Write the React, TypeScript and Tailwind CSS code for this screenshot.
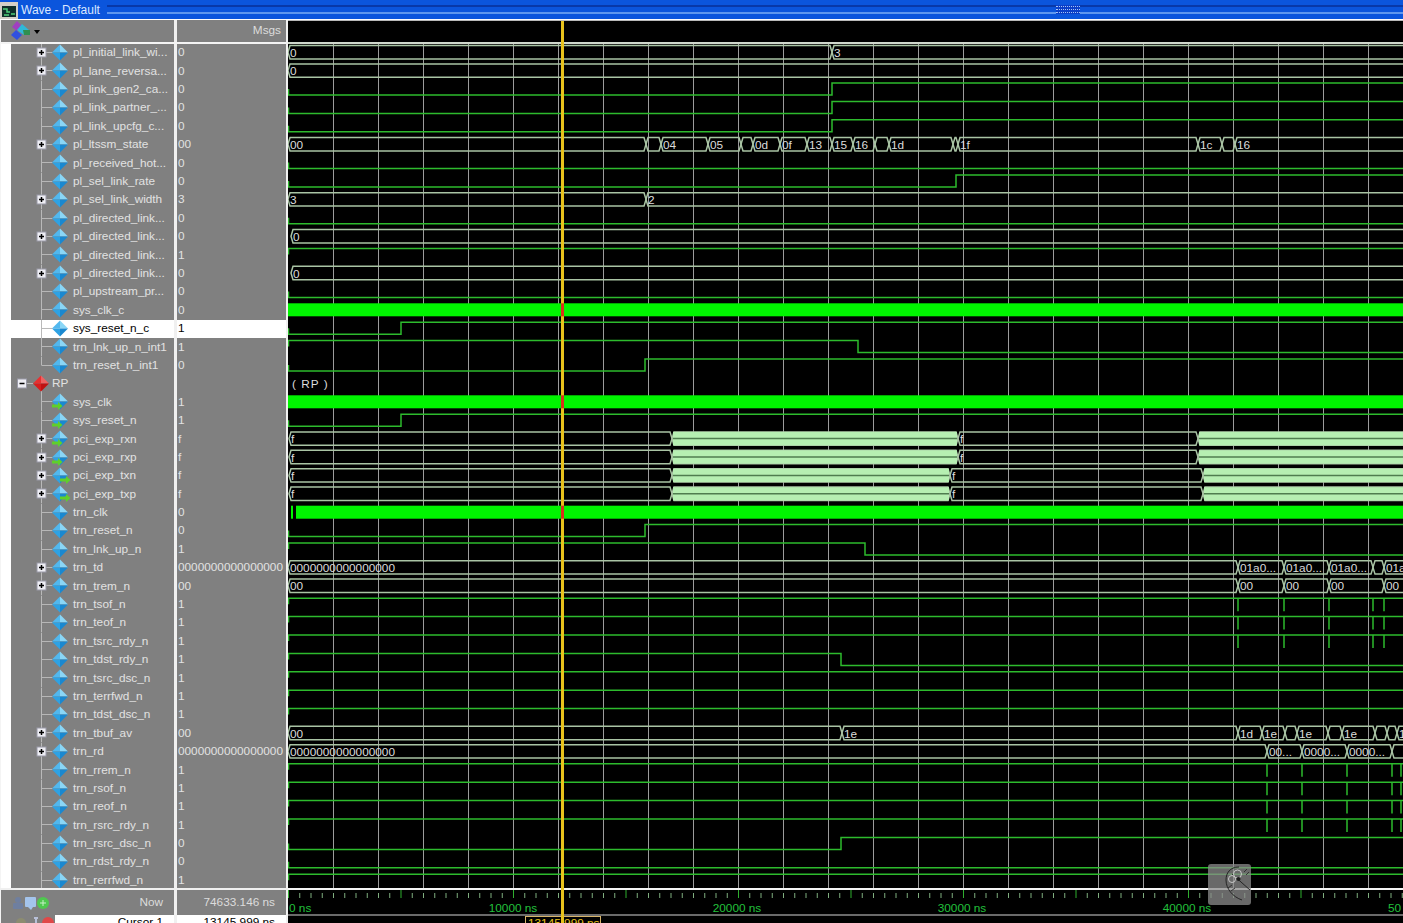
import React from 'react';

type Wave =
  | { k: 'bus'; t: [number, string][]; dense?: [number, number][] }
  | { k: 'step'; lv: 0 | 1; at?: number[]; spikes?: number[] }
  | { k: 'clk'; from: number }
  | { k: 'group' };

type Signal = {
  name: string;
  val: string;
  exp?: boolean;
  icon?: 'in' | 'out';
  wave: Wave;
};

const ROW_H = 18.4;
const ROW_TOP = 52.2;

const tSpikes = [1238, 1284, 1329, 1373, 1384];
const rSpikes = [1267, 1302, 1347, 1392, 1401];

const ltssm: [number, string][] = [
  [288, '00'], [646, ''], [661, '04'], [708, '05'], [741, ''], [753, '0d'], [780, '0f'],
  [807, '13'], [832, '15'], [853, '16'], [875, ''], [889, '1d'], [953, ''], [958, '1f'],
  [1198, '1c'], [1222, ''], [1235, '16'],
];
const tbuf: [number, string][] = [
  [288, '00'], [842, '1e'], [1238, '1d'], [1262, '1e'], [1285, ''], [1297, '1e'], [1328, ''],
  [1342, '1e'], [1375, ''], [1387, ''], [1397, '1'],
];
const zeros = '0000000000000000';

const signals: Signal[] = [
  { name: 'pl_initial_link_wi...', val: '0', exp: true, wave: { k: 'bus', t: [[288, '0'], [832, '3']] } },
  { name: 'pl_lane_reversa...', val: '0', exp: true, wave: { k: 'bus', t: [[288, '0']] } },
  { name: 'pl_link_gen2_ca...', val: '0', wave: { k: 'step', lv: 0, at: [832] } },
  { name: 'pl_link_partner_...', val: '0', wave: { k: 'step', lv: 0, at: [832] } },
  { name: 'pl_link_upcfg_c...', val: '0', wave: { k: 'step', lv: 0, at: [832] } },
  { name: 'pl_ltssm_state', val: '00', exp: true, wave: { k: 'bus', t: ltssm } },
  { name: 'pl_received_hot...', val: '0', wave: { k: 'step', lv: 0 } },
  { name: 'pl_sel_link_rate', val: '0', wave: { k: 'step', lv: 0, at: [956] } },
  { name: 'pl_sel_link_width', val: '3', exp: true, wave: { k: 'bus', t: [[288, '3'], [646, '2']] } },
  { name: 'pl_directed_link...', val: '0', wave: { k: 'step', lv: 0 } },
  { name: 'pl_directed_link...', val: '0', exp: true, wave: { k: 'bus', t: [[291, '0']] } },
  { name: 'pl_directed_link...', val: '1', wave: { k: 'step', lv: 1 } },
  { name: 'pl_directed_link...', val: '0', exp: true, wave: { k: 'bus', t: [[291, '0']] } },
  { name: 'pl_upstream_pr...', val: '0', wave: { k: 'step', lv: 0 } },
  { name: 'sys_clk_c', val: '0', wave: { k: 'clk', from: 288 } },
  { name: 'sys_reset_n_c', val: '1', wave: { k: 'step', lv: 0, at: [401] } },
  { name: 'trn_lnk_up_n_int1', val: '1', wave: { k: 'step', lv: 1, at: [858] } },
  { name: 'trn_reset_n_int1', val: '0', wave: { k: 'step', lv: 0, at: [645] } },
  { name: 'RP', val: '', wave: { k: 'group' } },
  { name: 'sys_clk', val: '1', icon: 'in', wave: { k: 'clk', from: 288 } },
  { name: 'sys_reset_n', val: '1', icon: 'in', wave: { k: 'step', lv: 0, at: [401] } },
  { name: 'pci_exp_rxn', val: 'f', exp: true, icon: 'in', wave: { k: 'bus', t: [[289, 'f'], [672, ''], [958, 'f'], [1198, '']], dense: [[673, 957], [1199, 1403]] } },
  { name: 'pci_exp_rxp', val: 'f', exp: true, icon: 'in', wave: { k: 'bus', t: [[289, 'f'], [672, ''], [958, 'f'], [1198, '']], dense: [[673, 957], [1199, 1403]] } },
  { name: 'pci_exp_txn', val: 'f', exp: true, icon: 'out', wave: { k: 'bus', t: [[289, 'f'], [672, ''], [950, 'f'], [1203, '']], dense: [[673, 949], [1204, 1403]] } },
  { name: 'pci_exp_txp', val: 'f', exp: true, icon: 'out', wave: { k: 'bus', t: [[289, 'f'], [672, ''], [950, 'f'], [1203, '']], dense: [[673, 949], [1204, 1403]] } },
  { name: 'trn_clk', val: '0', wave: { k: 'clk', from: 296 } },
  { name: 'trn_reset_n', val: '0', wave: { k: 'step', lv: 0, at: [645] } },
  { name: 'trn_lnk_up_n', val: '1', wave: { k: 'step', lv: 1, at: [865] } },
  { name: 'trn_td', val: zeros, exp: true, wave: { k: 'bus', t: [[288, zeros], [1238, '01a0...'], [1284, '01a0...'], [1329, '01a0...'], [1373, ''], [1384, '01a']] } },
  { name: 'trn_trem_n', val: '00', exp: true, wave: { k: 'bus', t: [[288, '00'], [1238, '00'], [1284, '00'], [1329, '00'], [1384, '00']] } },
  { name: 'trn_tsof_n', val: '1', wave: { k: 'step', lv: 1, spikes: tSpikes } },
  { name: 'trn_teof_n', val: '1', wave: { k: 'step', lv: 1, spikes: tSpikes } },
  { name: 'trn_tsrc_rdy_n', val: '1', wave: { k: 'step', lv: 1, spikes: tSpikes } },
  { name: 'trn_tdst_rdy_n', val: '1', wave: { k: 'step', lv: 1, at: [841] } },
  { name: 'trn_tsrc_dsc_n', val: '1', wave: { k: 'step', lv: 1 } },
  { name: 'trn_terrfwd_n', val: '1', wave: { k: 'step', lv: 1 } },
  { name: 'trn_tdst_dsc_n', val: '1', wave: { k: 'step', lv: 1 } },
  { name: 'trn_tbuf_av', val: '00', exp: true, wave: { k: 'bus', t: tbuf } },
  { name: 'trn_rd', val: zeros, exp: true, wave: { k: 'bus', t: [[288, zeros], [1267, '00...'], [1302, '0000...'], [1347, '0000...'], [1392, '']] } },
  { name: 'trn_rrem_n', val: '1', wave: { k: 'step', lv: 1, spikes: rSpikes } },
  { name: 'trn_rsof_n', val: '1', wave: { k: 'step', lv: 1, spikes: rSpikes } },
  { name: 'trn_reof_n', val: '1', wave: { k: 'step', lv: 1, spikes: rSpikes } },
  { name: 'trn_rsrc_rdy_n', val: '1', wave: { k: 'step', lv: 1, spikes: rSpikes } },
  { name: 'trn_rsrc_dsc_n', val: '0', wave: { k: 'step', lv: 0, at: [841] } },
  { name: 'trn_rdst_rdy_n', val: '0', wave: { k: 'step', lv: 0 } },
  { name: 'trn_rerrfwd_n', val: '1', wave: { k: 'step', lv: 1 } },
];

const GREEN = '#2dbb2d';
const BUS = '#a9c4a4';
const gridXs = Array.from({ length: 25 }, (_, i) => 333 + i * 45);

function Diamond({ red, icon }: { red?: boolean; icon?: 'in' | 'out' }) {
  const c = red
    ? ['#f06060', '#e83030', '#c01010', '#d81c1c']
    : ['#8ad6f6', '#52b8ee', '#1a88d0', '#2ea2e4'];
  return (
    <g>
      <polygon points="0,-8 8,0 0,0" fill={c[0]} />
      <polygon points="0,-8 -8,0 0,0" fill={c[1]} />
      <polygon points="8,0 0,8 0,0" fill={c[2]} />
      <polygon points="-8,0 0,8 0,0" fill={c[3]} />
      {icon === 'in' && <path d="M-8 5h6v-2.500l4.500 4-4.500 4v-2.500h-6z" fill="#5fd02a" transform="translate(0 -2)" />}
      {icon === 'out' && <path d="M1 5h6v-2.500l4.500 4-4.500 4v-2.500h-6z" fill="#5fd02a" transform="translate(-1 -2)" />}
    </g>
  );
}

function TreeCell({ s, last }: { s: Signal; last: boolean }) {
  const isGroup = s.wave.k === 'group';
  const w = isGroup ? 41 : 62;
  const mid = 8.2;
  return (
    <svg width={w} height={ROW_H} viewBox={`11 0 ${w} ${ROW_H}`} className="shrink-0 block">
      {isGroup ? (
        <g stroke="#b9b9b9" fill="none">
          <path d="M27 8.500h6M41.500 12v7" />
        </g>
      ) : (
        <g stroke="#b9b9b9" fill="none">
          <path d={`M41.500 0V${last ? mid : ROW_H}M41.500 ${mid + 0.3}h11`} />
        </g>
      )}
      {isGroup && (
        <g>
          <rect x="17.500" y="4" width="9" height="9" fill="#eeeef4" stroke="#9a9aa8" />
          <path d="M19.500 8.500h5" stroke="#000" strokeWidth="1.500" />
        </g>
      )}
      {s.exp && (
        <g>
          <rect x="37" y="4" width="9" height="9" fill="#eeeef4" stroke="#9a9aa8" />
          <path d="M39 8.500h5M41.500 6v5" stroke="#000" strokeWidth="1.500" />
        </g>
      )}
      <g transform={isGroup ? 'translate(41 8.500)' : 'translate(60 8.500)'}>
        <Diamond red={isGroup} icon={s.icon} />
      </g>
    </svg>
  );
}

function SignalRow({ s }: { s: Signal }) {
  const selected = s.name === 'sys_reset_n_c';
  const last = s.name === 'trn_reset_n_int1';
  return (
    <div className={`flex h-[18.4px] ${selected ? 'bg-white' : ''}`}>
      <div className={`flex w-[163px] shrink-0 items-center ${selected ? 'bg-white text-black' : 'bg-[#808080] text-[#e2e2e2]'}`}>
        <TreeCell s={s} last={last} />
        <span className="whitespace-nowrap">{s.name}</span>
      </div>
      <div className="w-[3px] shrink-0 bg-[#f0f0f0]" />
      <div className={`flex w-[109px] shrink-0 items-center pl-px ${selected ? 'bg-white text-black' : 'bg-[#808080] text-[#e2e2e2]'}`}>
        {s.val}
      </div>
    </div>
  );
}

function BusWave({ t, dense, c }: { t: [number, string][]; dense?: [number, number][]; c: number }) {
  const top = c - 6.7;
  const bot = c + 6.7;
  return (
    <g>
      {t.map(([x, label], i) => {
        const end = i + 1 < t.length ? t[i + 1][0] : 1410;
        return (
          <g key={i}>
            <path
              d={`M${x} ${c}L${x + 2} ${top}H${end - 2}L${end} ${c}L${end - 2} ${bot}H${x + 2}Z`}
              fill="none"
              stroke={BUS}
              strokeWidth="1.500"
            />
            {label && (
              <text x={x + 2} y={c + 4.500} fill="#dcdcdc" fontSize="11.800">
                {label}
              </text>
            )}
          </g>
        );
      })}
      {dense?.map(([a, b]) => (
        <g key={a}>
          <rect x={a} y={top} width={b - a} height={bot - top} fill="#b6efb2" />
          <path d={`M${a} ${c}H${b}`} stroke="#4f7d4f" strokeWidth="1.500" />
        </g>
      ))}
    </g>
  );
}

function StepWave({ lv, at, spikes, c }: { lv: 0 | 1; at?: number[]; spikes?: number[]; c: number }) {
  const hi = c - 6;
  const lo = c + 6;
  let cur: number = lv;
  let d = `M288.500 ${c}V${cur ? hi : lo}`;
  (at ?? []).forEach((x) => {
    cur = cur ? 0 : 1;
    d += `H${x}V${cur ? hi : lo}`;
  });
  d += 'H1405';
  return (
    <g>
      <path d={d} fill="none" stroke={GREEN} strokeWidth="1.500" />
      {spikes?.map((x) => (
        <path key={x} d={`M${x} ${hi}V${lo + 1}`} stroke={GREEN} strokeWidth="1.500" />
      ))}
    </g>
  );
}

function WaveRow({ s, i }: { s: Signal; i: number }) {
  const c = ROW_TOP + i * ROW_H;
  const w = s.wave;
  if (w.k === 'bus') return <BusWave t={w.t} dense={w.dense} c={c} />;
  if (w.k === 'step') return <StepWave lv={w.lv} at={w.at} spikes={w.spikes} c={c} />;
  if (w.k === 'clk')
    return (
      <g>
        <rect x={w.from} y={c - 6.500} width={1403 - w.from} height={13} fill="#00f500" />
        {w.from > 288 && <rect x="291" y={c - 6.500} width="2" height="13" fill="#00f500" />}
      </g>
    );
  return (
    <text x="292" y={c + 5} fill="#dcdcdc" fontSize="11.800" letterSpacing="1">
      ( RP )
    </text>
  );
}

function WaveCanvas() {
  return (
    <svg width="1115" height="844" viewBox="288 44 1115 844" className="block">
      {gridXs.map((x) => (
        <path key={x} d={`M${x + 0.5} 44V888`} stroke="#9c9c9c" strokeWidth="1" />
      ))}
      {signals.map((s, i) => (
        <WaveRow key={i} s={s} i={i} />
      ))}
    </svg>
  );
}

function TimeAxis() {
  const ticks = Array.from({ length: 100 }, (_, i) => i);
  const labels: [number, string, 'start' | 'middle'][] = [
    [289, '0 ns', 'start'],
    [513, '10000 ns', 'middle'],
    [737, '20000 ns', 'middle'],
    [962, '30000 ns', 'middle'],
    [1187, '40000 ns', 'middle'],
    [1388, '50', 'start'],
  ];
  return (
    <svg width="1115" height="24" viewBox="288 890 1115 24" className="block">
      {ticks.map((i) => {
        const x = 288 + i * 11.25 + 0.5;
        const major = i % 10 === 0;
        return <path key={i} d={`M${x} ${major ? 890 : 893}V898`} stroke={major ? '#2fae2f' : '#7fae7f'} strokeWidth="1" />;
      })}
      {labels.map(([x, t, a]) => (
        <text key={t} x={x} y="912" textAnchor={a} fill="#22c03c" fontSize="11.800">
          {t}
        </text>
      ))}
    </svg>
  );
}

function CursorLine() {
  const red = [14, 19, 25].map((i) => ROW_TOP + i * ROW_H);
  return (
    <svg width="5" height="902" viewBox="0 21 5 902" className="absolute left-[560px] top-[21px]">
      <rect x="1" y="21" width="3" height="902" fill="#e8c21c" />
      {red.map((c) => (
        <rect key={c} x="1" y={c - 6.500} width="3" height="13" fill="#d8301c" />
      ))}
    </svg>
  );
}

function MouseBadge() {
  return (
    <div className="absolute left-[1208px] top-[864px] h-[41px] w-[43px] rounded-[3px] bg-[#8c8c8c]/75">
      <svg width="43" height="41" viewBox="0 0 43 41" className="block">
        <g fill="none" stroke="#1c1c1c" strokeWidth="0.900">
          <path d="M31 3C22 3 18 9 18 16c0 9 7 17 16 20" />
          <path d="M24 10l18 16" />
          <circle cx="29.500" cy="10" r="4" stroke="#d0d0d0" />
          <circle cx="24" cy="15" r="3.500" stroke="#d0d0d0" />
          <path d="M24 21l-4 3M27 24l-4 3M36 8l3-3M38 11l3-3" stroke="#2a2a2a" />
        </g>
        <circle cx="30.500" cy="15" r="2" fill="#1c1c1c" />
      </svg>
    </div>
  );
}

function TitleBar() {
  return (
    <div className="flex h-[19px] items-center bg-[#0b55dc]">
      <svg width="18" height="19" viewBox="0 0 18 19" className="shrink-0 block">
        <rect x="0" y="2" width="18" height="17" fill="#d4d0c8" />
        <rect x="2" y="6" width="14" height="11" fill="#10302a" />
        <path d="M3 9h4v3h3M11 14h4M4 15h5" stroke="#4fd07a" strokeWidth="1.500" fill="none" />
      </svg>
      <span className="ml-[3px] w-[86px] shrink-0 whitespace-nowrap text-[12px] text-[#dce8ff]">Wave - Default</span>
      <div className="flex h-[9px] flex-1 items-stretch">
        <div className="w-[949px] border-t-2 border-b-2 border-t-[#0838a8] border-b-[#5f97ee] bg-[#0b55dc]" />
        <div className="flex w-[24px] flex-col justify-between bg-[#0b3fc8] py-px">
          {[0, 1, 2].map((r) => (
            <div key={r} className="h-px border-t border-dotted border-[#a8c4f4]" />
          ))}
        </div>
        <div className="flex-1 border-t-2 border-b-2 border-t-[#0838a8] border-b-[#5f97ee] bg-[#0b55dc]" />
      </div>
    </div>
  );
}

function FooterIcons({ row }: { row: 0 | 1 }) {
  return row === 0 ? (
    <svg width="40" height="14" viewBox="0 0 40 14" className="ml-[11px] shrink-0 block">
      <circle cx="6" cy="4" r="3" fill="#6f7f9f" />
      <rect x="1" y="7" width="10" height="6" rx="1" fill="#6f7f9f" />
      <rect x="13" y="1" width="11" height="10" rx="1" fill="#a4c4ec" />
      <path d="M16 11h5l-2 3z" fill="#a4c4ec" />
      <circle cx="31" cy="7" r="6" fill="#4fc84f" />
      <path d="M28 7h6M31 4v6" stroke="#c8f0c8" />
    </svg>
  ) : (
    <svg width="54" height="8" viewBox="0 0 54 8" className="shrink-0 block">
      <circle cx="20" cy="8" r="5" fill="#8c8c70" />
      <path d="M35 8V2M33 3h4" stroke="#b8c0d8" strokeWidth="2" />
      <circle cx="47" cy="8" r="6" fill="#e04848" />
    </svg>
  );
}

function LeftPane() {
  return (
    <div className="flex w-[288px] shrink-0 flex-col border-r-2 border-[#f0f0f0] bg-[#f4f4f4]">
      {/* Header */}
      <div className="flex h-[24px] items-start pl-px">
        <div className="flex h-[22px] w-[173px] items-center bg-[#808080] pl-[9px]">
          <svg width="32" height="20" viewBox="0 0 32 20" className="block">
            <polygon points="7,0 13,6 7,10 2,6" fill="#a040c0" />
            <polygon points="12,3 19,9 14,14 7,9" fill="#30b8d8" />
            <polygon points="6,9 12,14 7,19 1,14" fill="#3050e0" />
            <polygon points="13,9 20,9 20,14 14,14" fill="#2f8f4f" />
            <polygon points="24,9 30,9 27,13" fill="#000" />
          </svg>
        </div>
        <div className="h-[22px] w-[3px] bg-[#f0f0f0]" />
        <div className="flex h-[22px] flex-1 items-center justify-end bg-[#808080] pr-[5px] text-[#dcdcdc]">Msgs</div>
      </div>
      {/* Signal list */}
      <div className="h-[844px] overflow-hidden pl-[1px]">
        {signals.map((s, i) => (
          <div key={i} className="flex">
            <div className="w-[10px] shrink-0 bg-white" />
            <SignalRow s={s} />
          </div>
        ))}
      </div>
      <div className="h-[2px] bg-[#f0f0f0]" />
      {/* Now */}
      <div className="flex h-[25px] pl-px">
        <div className="flex w-[173px] items-center bg-[#808080] pr-[11px] text-[#dcdcdc]">
          <FooterIcons row={0} />
          <span className="ml-auto">Now</span>
        </div>
        <div className="w-[3px] bg-[#f0f0f0]" />
        <div className="flex flex-1 items-center justify-end bg-[#808080] pr-[11px] text-[#dcdcdc]">74633.146 ns</div>
      </div>
      {/* Cursor */}
      <div className="flex h-[8px] items-start overflow-hidden pl-px leading-[14px]">
        <div className="flex h-[8px] w-[173px] bg-[#808080]">
          <FooterIcons row={1} />
          <div className="flex-1 bg-white pr-[11px] text-right text-black">Cursor 1</div>
        </div>
        <div className="h-[8px] w-[3px] bg-[#f0f0f0]" />
        <div className="h-[8px] flex-1 bg-white pr-[11px] text-right text-black">13145.999 ns</div>
      </div>
    </div>
  );
}

function RightPane() {
  return (
    <div className="flex w-[1115px] shrink-0 flex-col bg-black">
      <div className="h-[24px] border-t border-b-2 border-t-[#b8b8b8] border-b-[#d0d8cc]" />
      <WaveCanvas />
      <div className="h-[2px] bg-[#f4f4f4]" />
      <TimeAxis />
      <div className="h-[2px] bg-[#6a6a6a]" />
      <div className="ml-[237px] h-[7px] w-[76px] overflow-hidden border-x border-t border-[#d8b468] pl-[2px] text-[11.800px] leading-[13px] text-[#e8c21c]">
        13145.999 ns
      </div>
    </div>
  );
}

export default function App() {
  return (
    <div className="relative h-[923px] w-[1403px] overflow-hidden bg-black font-['Liberation_Sans',Arial,sans-serif] text-[11.800px] leading-none">
      <TitleBar />
      <div className="h-px bg-white" />
      <div className="flex">
        <LeftPane />
        <RightPane />
      </div>
      <CursorLine />
      <MouseBadge />
    </div>
  );
}
